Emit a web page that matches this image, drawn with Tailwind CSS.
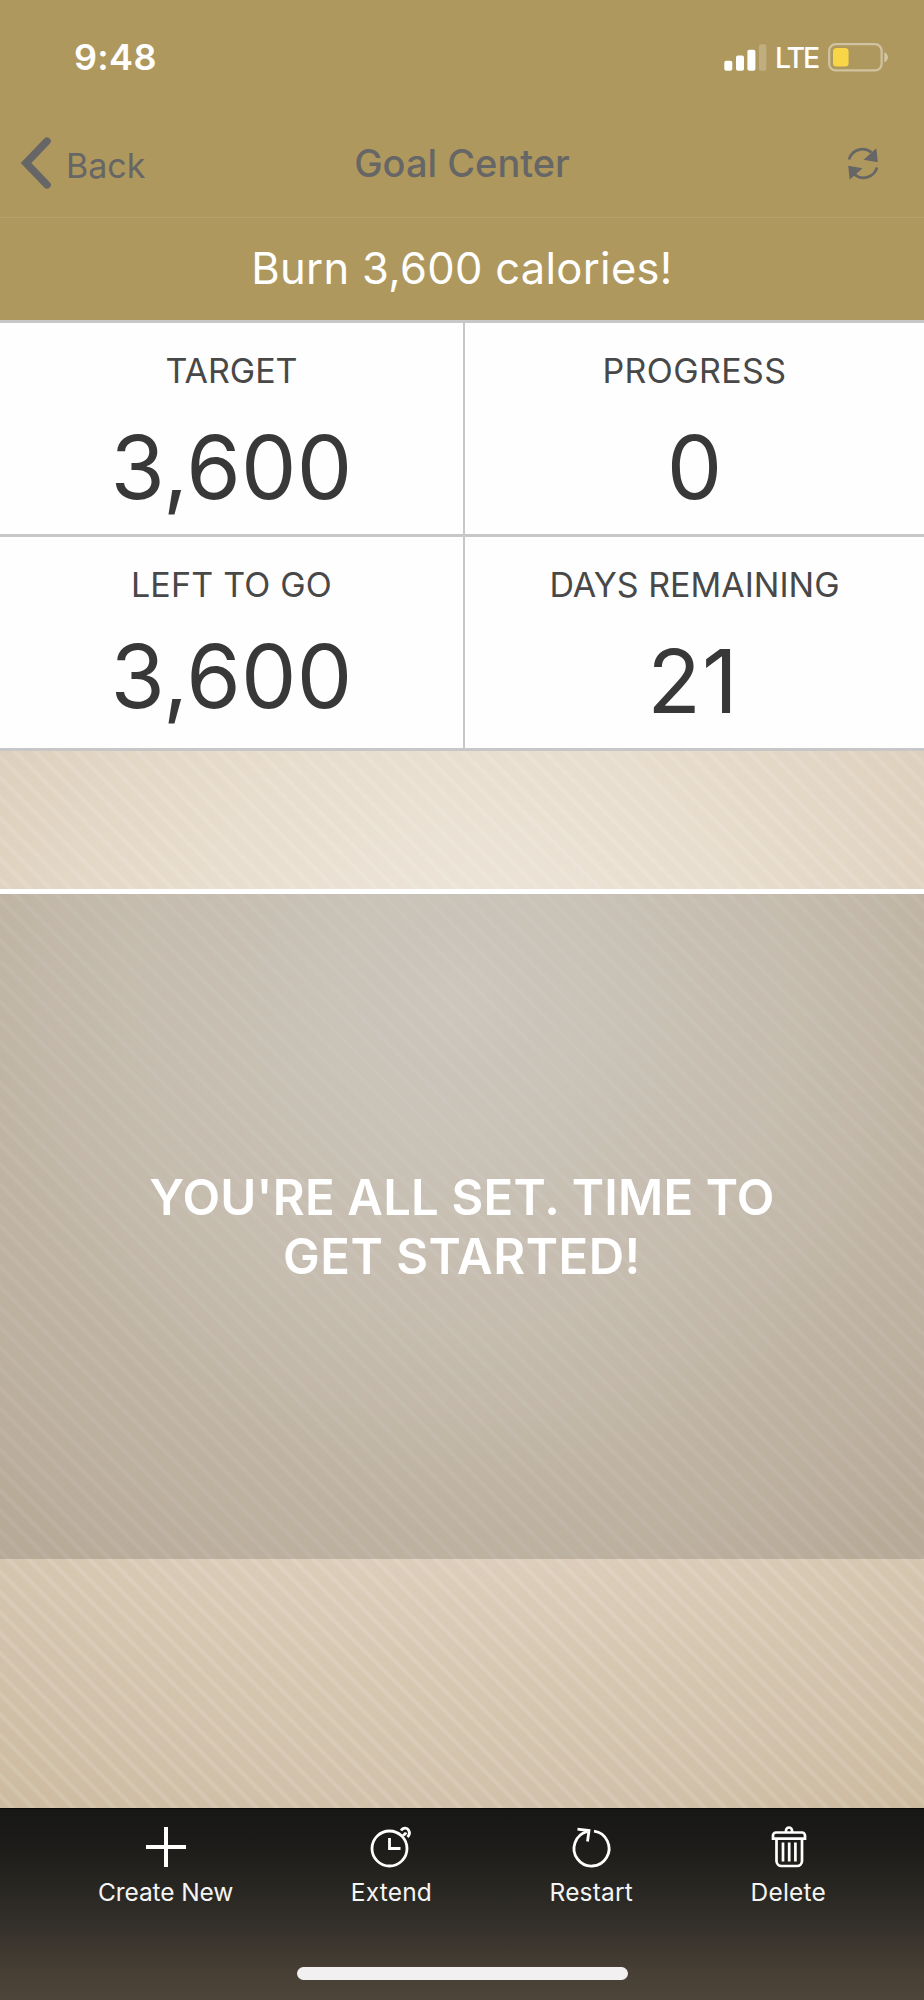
<!DOCTYPE html>
<html lang="en">
<head>
    <meta charset="UTF-8">
    <meta name="viewport" content="width=device-width, initial-scale=1.0">
    <title>Goal Center</title>
    <!-- Tailwind CSS CDN -->
    <script src="https://cdn.jsdelivr.net/npm/@tailwindcss/browser@4"></script>
    <style>
        body {
            font-family: 'Inter', sans-serif;
        }
        /* Diagonal pinstripes over a soft spotlight */
        .backdrop {
            background:
                repeating-linear-gradient(45deg, rgba(255, 255, 255, 0) 0, rgba(255, 255, 255, 0) 5.6px, rgba(255, 255, 255, 0.13) 8px, rgba(255, 255, 255, 0.13) 9.6px, rgba(255, 255, 255, 0) 12px, rgba(255, 255, 255, 0) 14.4px),
                radial-gradient(circle 930px at 462px 249px, #efe7dc 0%, #e6dbcb 36%, #dfd2bf 52%, #dacbb7 65%, #d4c5ae 78%, #d1c1aa 87%, #ccbb9f 100%);
        }
        .toolbar {
            background: linear-gradient(to bottom, #171715 0%, #1c1b19 18%, #22211d 30%, #302d28 55%, #3e382f 74%, #473e34 84%, #4e453a 100%);
        }
    </style>
</head>
<body class="antialiased">
    <div class="w-[924px] h-[2000px] flex flex-col overflow-hidden">

        <!-- Status bar -->
        <div class="h-[114px] shrink-0 bg-[#af985d] text-white flex items-center pl-[74px] pr-[35px]">
            <span class="text-[36px] leading-none font-semibold tracking-[0.3px]">9:48</span>
            <div class="ml-auto flex items-center">
                <svg class="w-[43px] h-[27px]" viewBox="0 0 43 27" fill="#fff">
                    <rect x="0.3" y="16.7" width="8" height="10" rx="2" />
                    <rect x="12" y="11.5" width="8" height="15.2" rx="2" />
                    <rect x="23.4" y="5.7" width="8" height="21" rx="2" />
                    <rect x="35" y="0.3" width="7.3" height="26.4" rx="2" fill-opacity="0.22" />
                </svg>
                <span class="ml-[8px] mt-[2px] w-[44px] text-[28.5px] leading-none font-medium tracking-[-2px]">LTE</span>
                <svg class="ml-[9px] w-[61px] h-[29px]" viewBox="0 0 61 29" fill="none">
                    <rect x="1.2" y="1.2" width="52.4" height="26.2" rx="6.5" stroke="#fff" stroke-opacity="0.42" stroke-width="2.2" />
                    <rect x="5" y="5" width="15.6" height="18.6" rx="3.5" fill="#f8d648" />
                    <path d="M56.3 9.3c2.2.8 3.6 2.7 3.6 5s-1.4 4.2-3.6 5z" fill="#fff" fill-opacity="0.45" />
                </svg>
            </div>
        </div>

        <!-- Navigation bar -->
        <div class="h-[104px] shrink-0 bg-[#af985d] border-b-[1.5px] border-[#b8a16b] text-[#666] grid grid-cols-3 items-start pt-[22px]">
            <div class="flex items-start pl-[19px]">
                <svg class="w-[32px] h-[54px]" viewBox="0 0 32 54" fill="none" stroke="#666" stroke-width="7.6" stroke-linecap="round" stroke-linejoin="miter">
                    <path d="M28 5.2L7 27L28 48.8" />
                </svg>
                <span class="ml-[15px] mt-[10px] text-[34px] leading-[40px]">Back</span>
            </div>
            <h1 class="mt-[7px] text-center text-[38px] leading-[40px] font-medium">Goal Center</h1>
            <div class="flex justify-end pr-[45px] mt-[11px]">
                <svg class="w-[32px] h-[33px]" viewBox="0 0 32 33" fill="none">
                    <path d="M2 12.5A14 14 0 0 1 24.5 5.5" stroke="#666" stroke-width="2.8" />
                    <path d="M29.3 1.2L30.8 15.2L16.5 12.8z" fill="#666" />
                    <path d="M30 20.5A14 14 0 0 1 7.5 27.5" stroke="#666" stroke-width="2.8" />
                    <path d="M2.7 32.8L1.2 18.8L15.5 21.2z" fill="#666" />
                </svg>
            </div>
        </div>

        <!-- Goal banner -->
        <div class="h-[102px] shrink-0 bg-[#af985d] text-white flex items-center justify-center text-[43.5px] tracking-[0.3px]">
            Burn 3,600 calories!
        </div>

        <!-- Stats -->
        <div class="h-[431px] shrink-0 grid grid-cols-[463px_1fr] grid-rows-[214px_214px] gap-x-[2px] bg-[#c7c7c8] border-t-[3px] border-[#c7c7c8] text-center text-[#383838]">
            <div class="bg-[#fefefe] border-b-[3px] border-[#c7c7c8] pt-[28px]">
                <p class="text-[34px] leading-[40px] text-[#484848]">TARGET</p>
                <p class="mt-[32px] text-[88px] leading-[88px] tracking-[0.2px]">3,600</p>
            </div>
            <div class="bg-[#fefefe] border-b-[3px] border-[#c7c7c8] pt-[28px]">
                <p class="text-[34px] leading-[40px] tracking-[0.4px] text-[#484848]">PROGRESS</p>
                <p class="mt-[32px] text-[88px] leading-[88px]">0</p>
            </div>
            <div class="bg-[#fefefe] border-b-[3px] border-[#c7c7c8] pt-[28px]">
                <p class="text-[34px] leading-[40px] tracking-[0.2px] text-[#484848]">LEFT TO GO</p>
                <p class="mt-[27px] text-[88px] leading-[88px] tracking-[0.2px]">3,600</p>
            </div>
            <div class="bg-[#fefefe] border-b-[3px] border-[#c7c7c8] pt-[28px]">
                <p class="text-[34px] leading-[40px] text-[#484848]">DAYS REMAINING</p>
                <p class="mt-[32px] pr-[3px] text-[88px] leading-[88px] tracking-[1px]">21</p>
            </div>
        </div>

        <!-- Message -->
        <div class="backdrop h-[1057px] shrink-0 pt-[138px]">
            <div class="h-[670px] bg-black/14 border-t-[5px] border-white bg-clip-padding flex items-center justify-center text-center">
                <p class="pt-[2px] text-[49px] leading-[58.5px] font-semibold tracking-[0.2px] text-white">
                    YOU'RE ALL SET. TIME TO<br>
                    <span class="tracking-[0.5px]">GET STARTED!</span>
                </p>
            </div>
        </div>

        <!-- Bottom toolbar -->
        <div class="toolbar h-[192px] shrink-0 border-t border-[#0c0b0a] text-[#f5f5f5] flex flex-col items-center">
            <div class="w-full flex justify-between px-[98px] pt-[16px] text-[24.5px] leading-[30px] tracking-[0.2px]">
                <div class="flex flex-col items-center gap-[8px]">
                    <svg class="w-[44px] h-[44px]" viewBox="0 0 44 44" stroke="#fff" stroke-width="4">
                        <path d="M22 2v40M2 22h40" />
                    </svg>
                    <span class="tracking-[-0.1px]">Create New</span>
                </div>
                <div class="flex flex-col items-center gap-[8px]">
                    <svg class="w-[44px] h-[44px]" viewBox="0 0 44 44" fill="none" stroke="#fff" stroke-width="2.8">
                        <circle cx="20.5" cy="23.5" r="17.5" />
                        <path d="M20.5 13v10.5h11" />
                        <path d="M32 5.5C34 2.5 38 2.3 39.5 5C41 7.5 40.500 10 38.500 12" />
                        <path d="M34 10.500C35.500 9 36.500 9 37 7.500" />
                    </svg>
                    <span>Extend</span>
                </div>
                <div class="flex flex-col items-center gap-[8px]">
                    <svg class="w-[44px] h-[44px]" viewBox="0 0 44 44" fill="none" stroke="#fff" stroke-width="2.8">
                        <path d="M25 6.2A17.5 17.5 0 1 1 18.5 6.5" />
                        <path d="M8.5 4.2L20 5.5L18.5 16.5" />
                    </svg>
                    <span>Restart</span>
                </div>
                <div class="flex flex-col items-center gap-[8px]">
                    <svg class="ml-[2px] w-[44px] h-[44px]" viewBox="0 0 44 44" fill="none" stroke="#fff" stroke-width="2.7">
                        <path d="M19 7.5V5.5a3 3 0 0 1 6 0V7.5" />
                        <path d="M6 13.7V10.5a3 3 0 0 1 3-3H35a3 3 0 0 1 3 3V13.7z" />
                        <path d="M9.5 14V36a5 5 0 0 0 5 5H30a5 5 0 0 0 5-5V14" />
                        <path d="M16 17.5V36.5M22.2 17.5V36.5M28.4 17.5V36.5" />
                    </svg>
                    <span>Delete</span>
                </div>
            </div>
            <!-- Home indicator -->
            <div class="mt-[60px] w-[331px] h-[13px] rounded-full bg-[#f2f0f0]"></div>
        </div>

    </div>
</body>
</html>
